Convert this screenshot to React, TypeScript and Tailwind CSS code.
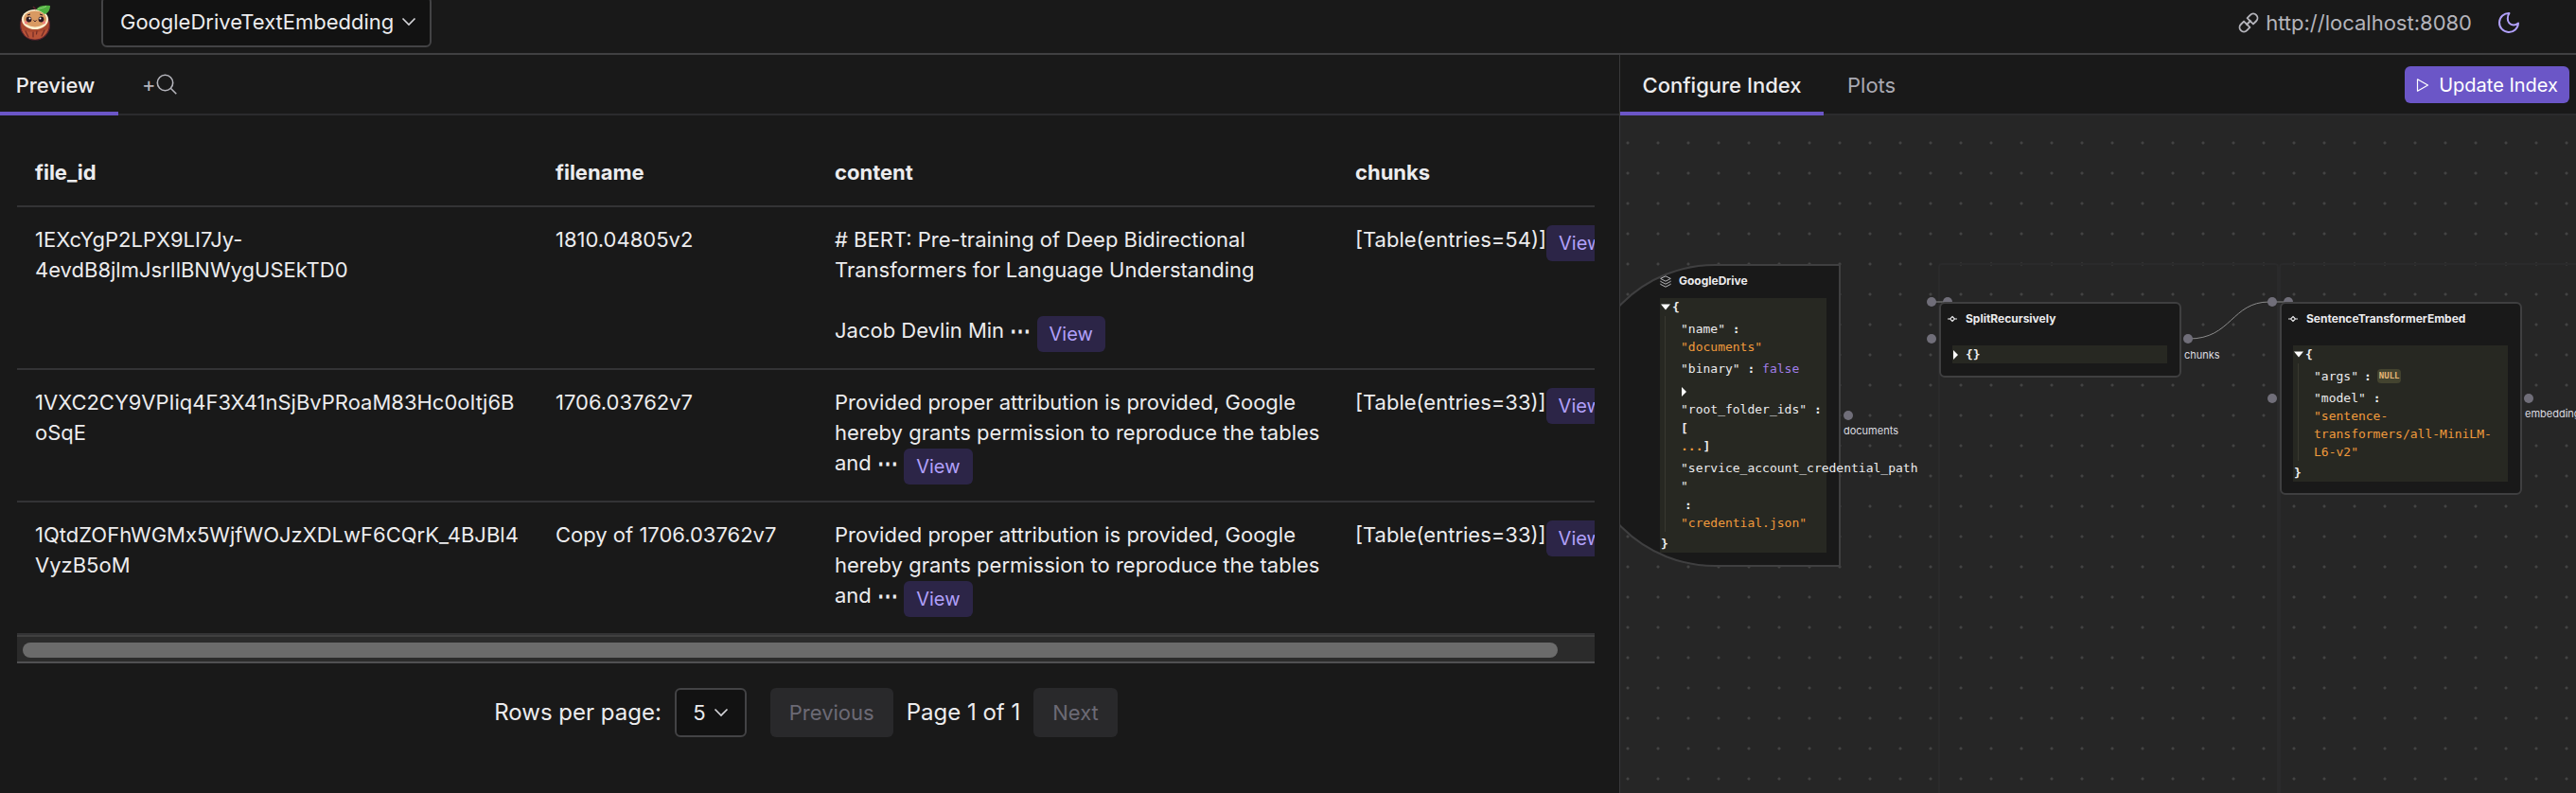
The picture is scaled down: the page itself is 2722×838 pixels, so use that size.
import React from "react";

type Box = { left: number; top: number };

const TEXT = "text-[#ececee]";

function Coconut() {
  return (
    <svg width="36" height="42" viewBox="0 0 36 42" className="shrink-0" role="img" aria-label="Cocoindex">
      <circle cx="17" cy="24.500" r="15.500" fill="#a9492f" stroke="#5e2430" strokeWidth="1.200" />
      <path d="M3 29c4 4 24 4 28-1-2 7-7 11.500-14 11.500S5 36 3 29z" fill="#b95338" />
      <path d="M7 31l3 6M15 32v5M19 31l-.5 3M27 30l-3 6" stroke="#6f2b26" strokeWidth="1.200" fill="none" strokeLinecap="round" />
      <ellipse cx="17" cy="18.500" rx="14" ry="10.500" fill="#fdf0cf" />
      <ellipse cx="17" cy="18" rx="12" ry="8.500" fill="#d99a62" />
      <circle cx="10.500" cy="18.500" r="2.900" fill="#2b1720" />
      <circle cx="23.500" cy="18.500" r="2.900" fill="#2b1720" />
      <circle cx="11.500" cy="17.500" r="1" fill="#fff" />
      <circle cx="22.500" cy="17.500" r="1" fill="#fff" />
      <path d="M9 14l3-1M22 13l3 1" stroke="#2b1720" strokeWidth="1" />
      <path d="M15.500 19.500c.8 1.300 2.200 1.300 3 0" stroke="#2b1720" strokeWidth="1" fill="none" />
      <circle cx="7.500" cy="21.800" r="1.600" fill="#ee7d7d" />
      <circle cx="26.500" cy="21.800" r="1.600" fill="#ee7d7d" />
      <path d="M18 8c3-4 8-5 15-4 0 4-2 8-6 9-2-2-5-4-9-5z" fill="#4fae3f" />
      <path d="M20 7.500c3-1 6-1 9-3" stroke="#8fd47c" strokeWidth="1" fill="none" />
      <path d="M15 5l3 3" stroke="#5e2430" strokeWidth="1.500" />
    </svg>
  );
}

function Chevron() {
  return (
    <svg width="16" height="10" viewBox="0 0 16 10" className="shrink-0" aria-hidden="true">
      <path d="M1.500 1.500L8 8l6.500-6.500" fill="none" stroke="#d6d6da" strokeWidth="1.600" />
    </svg>
  );
}

function LinkIcon() {
  return (
    <svg width="24" height="24" viewBox="0 0 24 24" fill="none" stroke="#b4b4bb" strokeWidth="1.900" strokeLinejoin="round" aria-hidden="true">
      <g transform="rotate(-45 12 12)">
        <path d="M14.500 7.500H19a4.500 4.500 0 0 1 0 9h-4.500z" />
        <path d="M9.500 7.500H5a4.500 4.500 0 0 0 0 9h4.500z" />
        <path d="M8.500 12h7" />
      </g>
    </svg>
  );
}

function Moon() {
  return (
    <svg width="24" height="24" viewBox="0 0 24 24" fill="none" stroke="#b1a0fa" strokeWidth="2" strokeLinejoin="round" aria-hidden="true">
      <path d="M12.500 2A10 10 0 1 0 22 12.500c-1.500 1.300-3.200 2-5 2a6.500 6.500 0 0 1-6.200-7c0-2.200.6-4 1.700-5.500z" />
    </svg>
  );
}

function SearchIcon() {
  return (
    <svg width="22" height="22" viewBox="0 0 22 22" fill="none" stroke="#b4b4bb" strokeWidth="1.600" aria-hidden="true">
      <circle cx="9.500" cy="9.500" r="8.200" />
      <path d="M15.300 15.300l6 6" />
    </svg>
  );
}

function Layers() {
  return (
    <svg width="12" height="13" viewBox="0 0 12 13" fill="none" stroke="#dcdce0" strokeWidth=".8" strokeLinejoin="round" className="shrink-0" aria-hidden="true">
      <path d="M6 .8l5.300 2.600L6 6.200.7 3.400z" />
      <path d="M.7 5.800v.6L6 9.200l5.300-2.800v-.6M.7 8.800v.6L6 12.200l5.300-2.800v-.6" />
    </svg>
  );
}

function Commit() {
  return (
    <svg width="12" height="8" viewBox="0 0 12 8" fill="none" stroke="#ececee" strokeWidth="1.100" className="shrink-0" aria-hidden="true">
      <path d="M1 4h2.500M8.500 4H11M6 1.500L8.500 4 6 6.500 3.500 4z" />
    </svg>
  );
}

function ViewButton() {
  return (
    <button type="button" className="-mb-1 inline-block h-[38px] rounded-md bg-[#2c2547] px-[13px] align-middle text-[20px] leading-6 text-[#b1a0fa]">
      View
    </button>
  );
}

const bert = "# BERT: Pre-training of Deep Bidirectional Transformers for Language Understanding\n\nJacob Devlin Min";
const attention = "Provided proper attribution is provided, Google hereby grants permission to reproduce the tables and";

const rows = [
  { id: "1EXcYgP2LPX9LI7Jy-4evdB8jlmJsrIlBNWygUSEkTD0", name: "1810.04805v2", content: bert, entries: 54 },
  { id: "1VXC2CY9VPIiq4F3X41nSjBvPRoaM83Hc0oItj6BoSqE", name: "1706.03762v7", content: attention, entries: 33 },
  { id: "1QtdZOFhWGMx5WjfWOJzXDLwF6CQrK_4BJBl4VyzB5oM", name: "Copy of 1706.03762v7", content: attention, entries: 33 },
];

function PreviewTable() {
  return (
    <div className="mt-6 overflow-hidden">
      <table className="w-[1704px] table-fixed border-collapse text-left text-[22px] leading-8">
        <colgroup>
          <col className="w-[550px]" />
          <col className="w-[295px]" />
          <col className="w-[550px]" />
          <col />
        </colgroup>
        <thead>
          <tr className="h-[72px] border-b-2 border-[#333335]">
            {["file_id", "filename", "content", "chunks"].map((h) => (
              <th key={h} scope="col" className="px-[19px] font-bold">{h}</th>
            ))}
          </tr>
        </thead>
        <tbody>
          {rows.map((r) => (
            <tr key={r.id} className="border-b-2 border-[#333335] align-top">
              <td className="px-[19px] pt-[18px] break-words">{r.id}</td>
              <td className="px-[19px] pt-[18px]">{r.name}</td>
              <td className="pt-[18px] pr-2 pb-[21px] pl-[19px] whitespace-pre-wrap">
                {r.content} <span className="font-bold">⋯</span> <ViewButton />
              </td>
              <td className="px-[19px] pt-[18px] whitespace-nowrap">
                [Table(entries={r.entries})]<ViewButton />
              </td>
            </tr>
          ))}
        </tbody>
      </table>
      <div className="h-[30px] border-y-2 border-t-[#404040] border-b-[#505052] bg-[#2b2b2b] px-1.5 pt-1.5">
        <div className="h-4 w-[98%] rounded-full bg-[#6b6b6b]" />
      </div>
    </div>
  );
}

function Arrow({ open }: { open?: boolean }) {
  return (
    <svg width="10" height="10" viewBox="0 0 10 10" fill="#fff" className="inline-block shrink-0" aria-hidden="true">
      {open ? <path d="M0 1.500h10L5 7.500z" /> : <path d="M1 0l5 5-5 5z" />}
    </svg>
  );
}

function Port({ left, top }: Box) {
  return <span className="absolute size-[10px] rounded-full bg-[#706e79]" style={{ left, top }} />;
}

function PortLabel({ left, top, children }: Box & { children: string }) {
  return <span className="absolute text-[11px] leading-4 text-[#dcdce0]" style={{ left, top }}>{children}</span>;
}

function Guide({ children }: { children: React.ReactNode }) {
  return <div className="ml-1 border-l border-[#383830] pl-4">{children}</div>;
}

const MONO = "font-['DejaVu_Sans_Mono',monospace] text-[13px] leading-[19px]";

function Canvas() {
  return (
    <div className="relative min-h-0 flex-1 overflow-hidden bg-[#262626] bg-[radial-gradient(circle,#434343_1px,transparent_2px)] bg-[length:32px_32px] bg-[position:-8px_13px]">
      <div className="absolute top-[156px] left-[336px] h-[800px] w-[360px] rounded border-2 border-[#2a2a2b]" />
      <div className="absolute top-[156px] left-[696px] h-[800px] w-[500px] rounded border-2 border-[#2a2a2b]" />
      <svg width="400" height="80" viewBox="0 0 400 80" fill="none" stroke="#8b8b8b" className="absolute top-[190px] left-[326px]" aria-hidden="true">
        <path d="M3 7h20M363 7h20M275 46c45 0 45-39 85-39" />
      </svg>
      <Port left={341} top={192} />
      <Port left={701} top={192} />

      <section className="absolute top-[157px] left-[-40px] h-[320px] w-[273px] rounded-l-[140px] border-2 border-[#3f3f40] bg-[#191919]">
        <h3 className="mt-2 ml-20 flex items-center gap-2 text-[12px] leading-4 font-bold">
          <Layers />GoogleDrive
        </h3>
        <div className={`mt-2.5 ml-20 h-[269px] w-[176px] bg-[#272822] px-px ${MONO}`}>
          <div className="flex items-center gap-0.5"><Arrow open /><b>{"{"}</b></div>
          <Guide>
            <div className="pt-1">"name" <b>:</b></div>
            <div className="text-[#f09a3c]">"documents"</div>
            <div className="pt-1">"binary" <b>:</b> <span className="text-[#a07ee8]">false</span></div>
            <div className="pt-1"><Arrow /></div>
            <div className="pt-px whitespace-nowrap">"root_folder_ids" <b>:</b></div>
            <div className="pt-px"><b>[</b></div>
            <div><b className="text-[#f09a3c]">...</b><b>]</b></div>
            <div className="pt-1 whitespace-nowrap">"service_account_credential_path</div>
            <div>"</div>
            <div className="pt-px pl-1"><b>:</b></div>
            <div className="text-[#f09a3c]">"credential.json"</div>
          </Guide>
          <div className="pt-[3px]"><b>{"}"}</b></div>
        </div>
      </section>
      <Port left={236} top={312} />
      <PortLabel left={236} top={325}>documents</PortLabel>

      <Port left={324} top={192} />
      <Port left={324} top={231} />
      <section className="absolute top-[197px] left-[337px] h-20 w-[256px] rounded-md border-2 border-[#3f3f40] bg-[#191919]">
        <h3 className="mt-2 ml-1.5 flex items-center gap-2 text-[12px] leading-4 font-bold"><Commit />SplitRecursively</h3>
        <div className={`mt-5 ml-3 flex w-[227px] items-center gap-1 bg-[#272822] ${MONO}`}>
          <Arrow /><b>{"{}"}</b>
        </div>
      </section>
      <Port left={595} top={231} />
      <PortLabel left={596} top={245}>chunks</PortLabel>

      <Port left={684} top={192} />
      <Port left={684} top={294} />
      <section className="absolute top-[197px] left-[697px] w-[256px] rounded-md border-2 border-[#3f3f40] bg-[#191919] pb-3">
        <h3 className="mt-2 ml-1.5 flex items-center gap-2 text-[12px] leading-4 font-bold"><Commit />SentenceTransformerEmbed</h3>
        <div className={`mt-5 ml-3 h-36 w-[227px] bg-[#272822] pl-px ${MONO}`}>
          <div className="flex items-center gap-0.5"><Arrow open /><b>{"{"}</b></div>
          <Guide>
            <div className="flex items-center gap-1.5 pt-1">"args" <b>:</b><span className="rounded-sm bg-[#43432f] px-0.5 text-[9px] leading-[15px] font-bold text-[#e8b877]">NULL</span></div>
            <div className="pt-1">"model" <b>:</b></div>
            <div className="text-[#f09a3c]">"sentence-<br />transformers/all-MiniLM-<br />L6-v2"</div>
          </Guide>
          <div className="pt-[3px]"><b>{"}"}</b></div>
        </div>
      </section>
      <Port left={955} top={294} />
      <PortLabel left={956} top={307}>embedding</PortLabel>
    </div>
  );
}

export default function App() {
  return (
    <div className={`flex h-screen flex-col overflow-hidden bg-[#191919] font-['Inter',sans-serif] ${TEXT}`}>
      <header className="flex h-[58px] shrink-0 items-start border-b-2 border-[#404042] pr-[59px] pl-5">
        <div className="mt-0.5"><Coconut /></div>
        <button type="button" className="-mt-1 ml-[51px] flex h-[54px] items-center gap-2 rounded-md border-2 border-[#434345] bg-[#121212] pr-3.5 pl-[18px] text-[22px]">
          GoogleDriveTextEmbedding <Chevron />
        </button>
        <div className="ml-auto flex h-12 items-center gap-1.5 text-[22px] text-[#b4b4bb]">
          <LinkIcon />
          <a href="http://localhost:8080">http://localhost:8080</a>
          <button type="button" aria-label="Toggle theme" className="ml-[21px]"><Moon /></button>
        </div>
      </header>
      <div className="flex min-h-0 flex-1">
        <main className="min-w-0 flex-1">
          <nav className="flex h-16 items-stretch border-b-2 border-[#2b2b2d] text-[22px]">
            <button type="button" className="-mb-0.5 w-[125px] border-b-4 border-[#6b56c7] pt-1 pr-2 font-medium">Preview</button>
            <button type="button" aria-label="Add query" className="ml-[25px] flex items-center text-[#b4b4bb]">+<SearchIcon /></button>
          </nav>
          <div className="pr-[26px] pl-[18px]">
            <PreviewTable />
            <div className="mt-[26px] flex items-center justify-center text-[24px]">
              <span>Rows per page:</span>
              <button type="button" className="ml-3.5 flex h-[52px] w-[76px] items-center justify-center gap-2 rounded-md border-2 border-[#434345] bg-[#121212] text-[22px]">5 <Chevron /></button>
              <button type="button" disabled className="ml-[25px] h-[52px] rounded-md bg-[#29292b] px-5 text-[22px] text-[#6c6a75]">Previous</button>
              <span className="mx-3.5">Page 1 of 1</span>
              <button type="button" disabled className="h-[52px] rounded-md bg-[#29292b] px-5 text-[22px] text-[#6c6a75]">Next</button>
            </div>
          </div>
        </main>
        <aside className="flex w-[1011px] shrink-0 flex-col border-l border-[#39393b]">
          <nav className="flex h-16 shrink-0 items-stretch border-b-2 border-[#2b2b2d] text-[22px]">
            <button type="button" className="-mb-0.5 w-[215px] border-b-4 border-[#6b56c7] pt-1 font-medium">Configure Index</button>
            <button type="button" className="ml-[25px] pt-0.5 text-[#a9a9b2]">Plots</button>
            <button type="button" className="mt-3 mr-[7px] ml-auto flex h-[39px] items-center gap-2.5 rounded-md bg-[#6b56c7] px-3 text-[20px] text-white">
              <svg width="14" height="14" viewBox="0 0 14 14" fill="none" stroke="#fff" strokeWidth="1.200" strokeLinejoin="round" aria-hidden="true"><path d="M1.500 .8l11 6.200-11 6.200z" /></svg>
              Update Index
            </button>
          </nav>
          <Canvas />
        </aside>
      </div>
    </div>
  );
}
